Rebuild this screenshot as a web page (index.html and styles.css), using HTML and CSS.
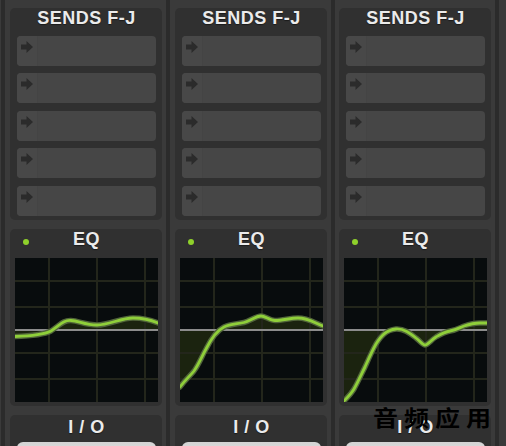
FILE: index.html
```html
<!DOCTYPE html>
<html lang="en">
<head>
<meta charset="utf-8">
<title>Mixer strips</title>
<link rel="stylesheet" href="styles.css">
</head>
<body>
<div class="console">
  <section class="strip">
    <div class="panel sends">
      <h2 class="panel-title">SENDS F-J</h2>
      <ul class="send-list">
        <li class="send"><span class="send-slot"><svg class="send-arrow" viewBox="0 0 12 12"><path d="M0 3.5H5.5V0L12 6L5.5 12V8.5H0Z"/></svg></span></li>
        <li class="send"><span class="send-slot"><svg class="send-arrow" viewBox="0 0 12 12"><path d="M0 3.5H5.5V0L12 6L5.5 12V8.5H0Z"/></svg></span></li>
        <li class="send"><span class="send-slot"><svg class="send-arrow" viewBox="0 0 12 12"><path d="M0 3.5H5.5V0L12 6L5.5 12V8.5H0Z"/></svg></span></li>
        <li class="send"><span class="send-slot"><svg class="send-arrow" viewBox="0 0 12 12"><path d="M0 3.5H5.5V0L12 6L5.5 12V8.5H0Z"/></svg></span></li>
        <li class="send"><span class="send-slot"><svg class="send-arrow" viewBox="0 0 12 12"><path d="M0 3.5H5.5V0L12 6L5.5 12V8.5H0Z"/></svg></span></li>
      </ul>
    </div>
    <div class="panel eq">
      <div class="eq-header"><span class="eq-led"></span><h2 class="panel-title">EQ</h2><span></span></div>
      <svg class="eq-graph" viewBox="0 0 143 144">
        <rect class="eq-bg" width="143" height="144"/>
        <path class="eq-fill" d="M0,78.5 C15,78 28,77 36,73 C44,68 48,62 56,62.5 C64,63 70,67 82,67 C94,67 106,60 118,60 C128,60 136,62 143,65 L143,72 L0,72 Z"/>
        <g class="eq-grid">
          <rect x="33" y="0" width="2" height="144"/><rect x="81" y="0" width="2" height="144"/><rect x="129" y="0" width="2" height="144"/>
          <rect x="0" y="22" width="143" height="2"/><rect x="0" y="48" width="143" height="2"/><rect x="0" y="94" width="143" height="2"/><rect x="0" y="120" width="143" height="2"/>
        </g>
        <rect class="eq-zero" x="0" y="71" width="143" height="2"/>
        <path class="eq-halo" d="M0,78.5 C15,78 28,77 36,73 C44,68 48,62 56,62.5 C64,63 70,67 82,67 C94,67 106,60 118,60 C128,60 136,62 143,65"/>
        <path class="eq-curve" d="M0,78.5 C15,78 28,77 36,73 C44,68 48,62 56,62.5 C64,63 70,67 82,67 C94,67 106,60 118,60 C128,60 136,62 143,65"/>
      </svg>
    </div>
    <div class="panel io">
      <h2 class="panel-title">I / O</h2>
      <div class="io-button"></div>
    </div>
  </section>

  <section class="strip">
    <div class="panel sends">
      <h2 class="panel-title">SENDS F-J</h2>
      <ul class="send-list">
        <li class="send"><span class="send-slot"><svg class="send-arrow" viewBox="0 0 12 12"><path d="M0 3.5H5.5V0L12 6L5.5 12V8.5H0Z"/></svg></span></li>
        <li class="send"><span class="send-slot"><svg class="send-arrow" viewBox="0 0 12 12"><path d="M0 3.5H5.5V0L12 6L5.5 12V8.5H0Z"/></svg></span></li>
        <li class="send"><span class="send-slot"><svg class="send-arrow" viewBox="0 0 12 12"><path d="M0 3.5H5.5V0L12 6L5.5 12V8.5H0Z"/></svg></span></li>
        <li class="send"><span class="send-slot"><svg class="send-arrow" viewBox="0 0 12 12"><path d="M0 3.5H5.5V0L12 6L5.5 12V8.5H0Z"/></svg></span></li>
        <li class="send"><span class="send-slot"><svg class="send-arrow" viewBox="0 0 12 12"><path d="M0 3.5H5.5V0L12 6L5.5 12V8.5H0Z"/></svg></span></li>
      </ul>
    </div>
    <div class="panel eq">
      <div class="eq-header"><span class="eq-led"></span><h2 class="panel-title">EQ</h2><span></span></div>
      <svg class="eq-graph" viewBox="0 0 143 144">
        <rect class="eq-bg" width="143" height="144"/>
        <path class="eq-fill" d="M0,129 C5,122 10,118 14,113 C19,106 22,98 26,91 C30,83 36,73 44,69 C50,66 58,66 64,64.5 C70,63 76,58 81,58 C85,58 90,62.5 95,62.5 C103,62.5 110,60 118,60 C128,60 135,65 143,68 L143,72 L0,72 Z"/>
        <g class="eq-grid">
          <rect x="33" y="0" width="2" height="144"/><rect x="81" y="0" width="2" height="144"/><rect x="129" y="0" width="2" height="144"/>
          <rect x="0" y="22" width="143" height="2"/><rect x="0" y="48" width="143" height="2"/><rect x="0" y="94" width="143" height="2"/><rect x="0" y="120" width="143" height="2"/>
        </g>
        <rect class="eq-zero" x="0" y="71" width="143" height="2"/>
        <path class="eq-halo" d="M0,129 C5,122 10,118 14,113 C19,106 22,98 26,91 C30,83 36,73 44,69 C50,66 58,66 64,64.5 C70,63 76,58 81,58 C85,58 90,62.5 95,62.5 C103,62.5 110,60 118,60 C128,60 135,65 143,68"/>
        <path class="eq-curve" d="M0,129 C5,122 10,118 14,113 C19,106 22,98 26,91 C30,83 36,73 44,69 C50,66 58,66 64,64.5 C70,63 76,58 81,58 C85,58 90,62.5 95,62.5 C103,62.5 110,60 118,60 C128,60 135,65 143,68"/>
      </svg>
    </div>
    <div class="panel io">
      <h2 class="panel-title">I / O</h2>
      <div class="io-button"></div>
    </div>
  </section>

  <section class="strip strip-tight">
    <div class="panel sends">
      <h2 class="panel-title">SENDS F-J</h2>
      <ul class="send-list">
        <li class="send"><span class="send-slot"><svg class="send-arrow" viewBox="0 0 12 12"><path d="M0 3.5H5.5V0L12 6L5.5 12V8.5H0Z"/></svg></span></li>
        <li class="send"><span class="send-slot"><svg class="send-arrow" viewBox="0 0 12 12"><path d="M0 3.5H5.5V0L12 6L5.5 12V8.5H0Z"/></svg></span></li>
        <li class="send"><span class="send-slot"><svg class="send-arrow" viewBox="0 0 12 12"><path d="M0 3.5H5.5V0L12 6L5.5 12V8.5H0Z"/></svg></span></li>
        <li class="send"><span class="send-slot"><svg class="send-arrow" viewBox="0 0 12 12"><path d="M0 3.5H5.5V0L12 6L5.5 12V8.5H0Z"/></svg></span></li>
        <li class="send"><span class="send-slot"><svg class="send-arrow" viewBox="0 0 12 12"><path d="M0 3.5H5.5V0L12 6L5.5 12V8.5H0Z"/></svg></span></li>
      </ul>
    </div>
    <div class="panel eq">
      <div class="eq-header"><span class="eq-led"></span><h2 class="panel-title">EQ</h2><span></span></div>
      <svg class="eq-graph" viewBox="0 0 143 144">
        <rect class="eq-bg" width="143" height="144"/>
        <path class="eq-fill" d="M0,143 C4,139 7,136 10,131 C14,124 17,117 21,109 C25,100 28,93 32,86 C37,78 42,72 52,71 C60,70.5 66,75 72,80 C76,83 79,87 81,87 C84,87 87,82 92,79 C97,76 100,74 106,73 C112,72 115,70 120,68 C126,66 130,65 136,65 L143,65 L143,72 L0,72 Z"/>
        <g class="eq-grid">
          <rect x="33" y="0" width="2" height="144"/><rect x="81" y="0" width="2" height="144"/><rect x="129" y="0" width="2" height="144"/>
          <rect x="0" y="22" width="143" height="2"/><rect x="0" y="48" width="143" height="2"/><rect x="0" y="94" width="143" height="2"/><rect x="0" y="120" width="143" height="2"/>
        </g>
        <rect class="eq-zero" x="0" y="71" width="143" height="2"/>
        <path class="eq-halo" d="M0,143 C4,139 7,136 10,131 C14,124 17,117 21,109 C25,100 28,93 32,86 C37,78 42,72 52,71 C60,70.5 66,75 72,80 C76,83 79,87 81,87 C84,87 87,82 92,79 C97,76 100,74 106,73 C112,72 115,70 120,68 C126,66 130,65 136,65 L143,65"/>
        <path class="eq-curve" d="M0,143 C4,139 7,136 10,131 C14,124 17,117 21,109 C25,100 28,93 32,86 C37,78 42,72 52,71 C60,70.5 66,75 72,80 C76,83 79,87 81,87 C84,87 87,82 92,79 C97,76 100,74 106,73 C112,72 115,70 120,68 C126,66 130,65 136,65 L143,65"/>
      </svg>
    </div>
    <div class="panel io">
      <h2 class="panel-title">I / O</h2>
      <div class="io-button"></div>
    </div>
  </section>

  <section class="strip strip-edge"></section>
</div>
<div class="watermark">音频应用</div>
</body>
</html>
```

FILE: styles.css
```css
* {
  box-sizing: border-box;
}

html,
body {
  margin: 0;
  padding: 0;
}

body {
  position: relative;
  width: 506px;
  height: 446px;
  overflow: hidden;
  background: #3a3a3a;
  font-family: "Liberation Sans", Arial, sans-serif;
}

.console {
  display: flex;
  height: 446px;
  padding-left: 1px;
}

.strip {
  flex: none;
  width: 165px;
  height: 446px;
  border-left: 4px solid #2b2b2b;
  padding: 8px 4px 0 5px;
  display: flex;
  flex-direction: column;
  gap: 9px;
}

.strip-tight {
  width: 164px;
  padding-left: 4px;
}

.strip-edge {
  width: 20px;
}

.panel {
  flex: none;
  width: 152px;
  background: #303030;
  border-radius: 5px;
}

.panel-title {
  margin: 0;
  font-size: 18px;
  font-weight: bold;
  line-height: 21px;
  letter-spacing: 0.5px;
  color: #ebebeb;
  text-align: center;
  white-space: nowrap;
  text-shadow: 0 1px 1px rgba(0, 0, 0, 0.45);
}

/* Sends */
.sends {
  height: 212px;
  padding: 0 6px 0 7px;
  display: flex;
  flex-direction: column;
}

.sends .panel-title {
  height: 27.5px;
  flex: none;
}

.send-list {
  list-style: none;
  margin: 0;
  padding: 0;
  display: flex;
  flex-direction: column;
  gap: 7.5px;
}

.send {
  height: 30px;
  background: #464646;
  border-radius: 4px;
  display: flex;
}

.send-slot {
  width: 21px;
  padding: 5px 0 0 4px;
  border-right: 1px solid #444444;
  background: #484848;
  border-radius: 4px 0 0 4px;
}

.send-arrow {
  display: block;
  width: 12px;
  height: 12px;
  fill: #2b2b2b;
}

/* EQ */
.eq {
  height: 177px;
  padding: 0 4px 4px 5px;
  display: flex;
  flex-direction: column;
}

.eq-header {
  height: 29px;
  flex: none;
  display: grid;
  grid-template-columns: 1fr auto 1fr;
  align-items: start;
}

.eq-led {
  width: 6px;
  height: 6px;
  margin: 10px 0 0 8px;
  border-radius: 50%;
  background: #8fd12b;
}

.eq-graph {
  display: block;
  width: 143px;
  height: 144px;
}

.eq-bg {
  fill: #080c0d;
}

.eq-fill {
  fill: #1b230f;
}

.eq-grid rect {
  fill: #23261b;
}

.eq-zero {
  fill: #8c8c8c;
}

.eq-halo {
  fill: none;
  stroke: #51653a;
  stroke-width: 5.5;
  stroke-linecap: round;
  stroke-linejoin: round;
}

.eq-curve {
  fill: none;
  stroke: #8fcf3a;
  stroke-width: 2.8;
  stroke-linecap: round;
  stroke-linejoin: round;
}

/* I/O */
.io {
  flex: 1;
  padding: 1.5px 6px 0 7px;
}

.io-button {
  margin-top: 4px;
  height: 20px;
  border-radius: 6px 6px 0 0;
  background: linear-gradient(#d3d3d3, #e8e8e8);
}

.watermark {
  position: absolute;
  left: 373px;
  top: 406px;
  font-family: "Noto Sans CJK SC", sans-serif;
  font-size: 25px;
  font-weight: 700;
  line-height: 1;
  letter-spacing: 6px;
  color: #000;
  white-space: nowrap;
  transform: scaleY(0.85);
  transform-origin: top left;
}
```
